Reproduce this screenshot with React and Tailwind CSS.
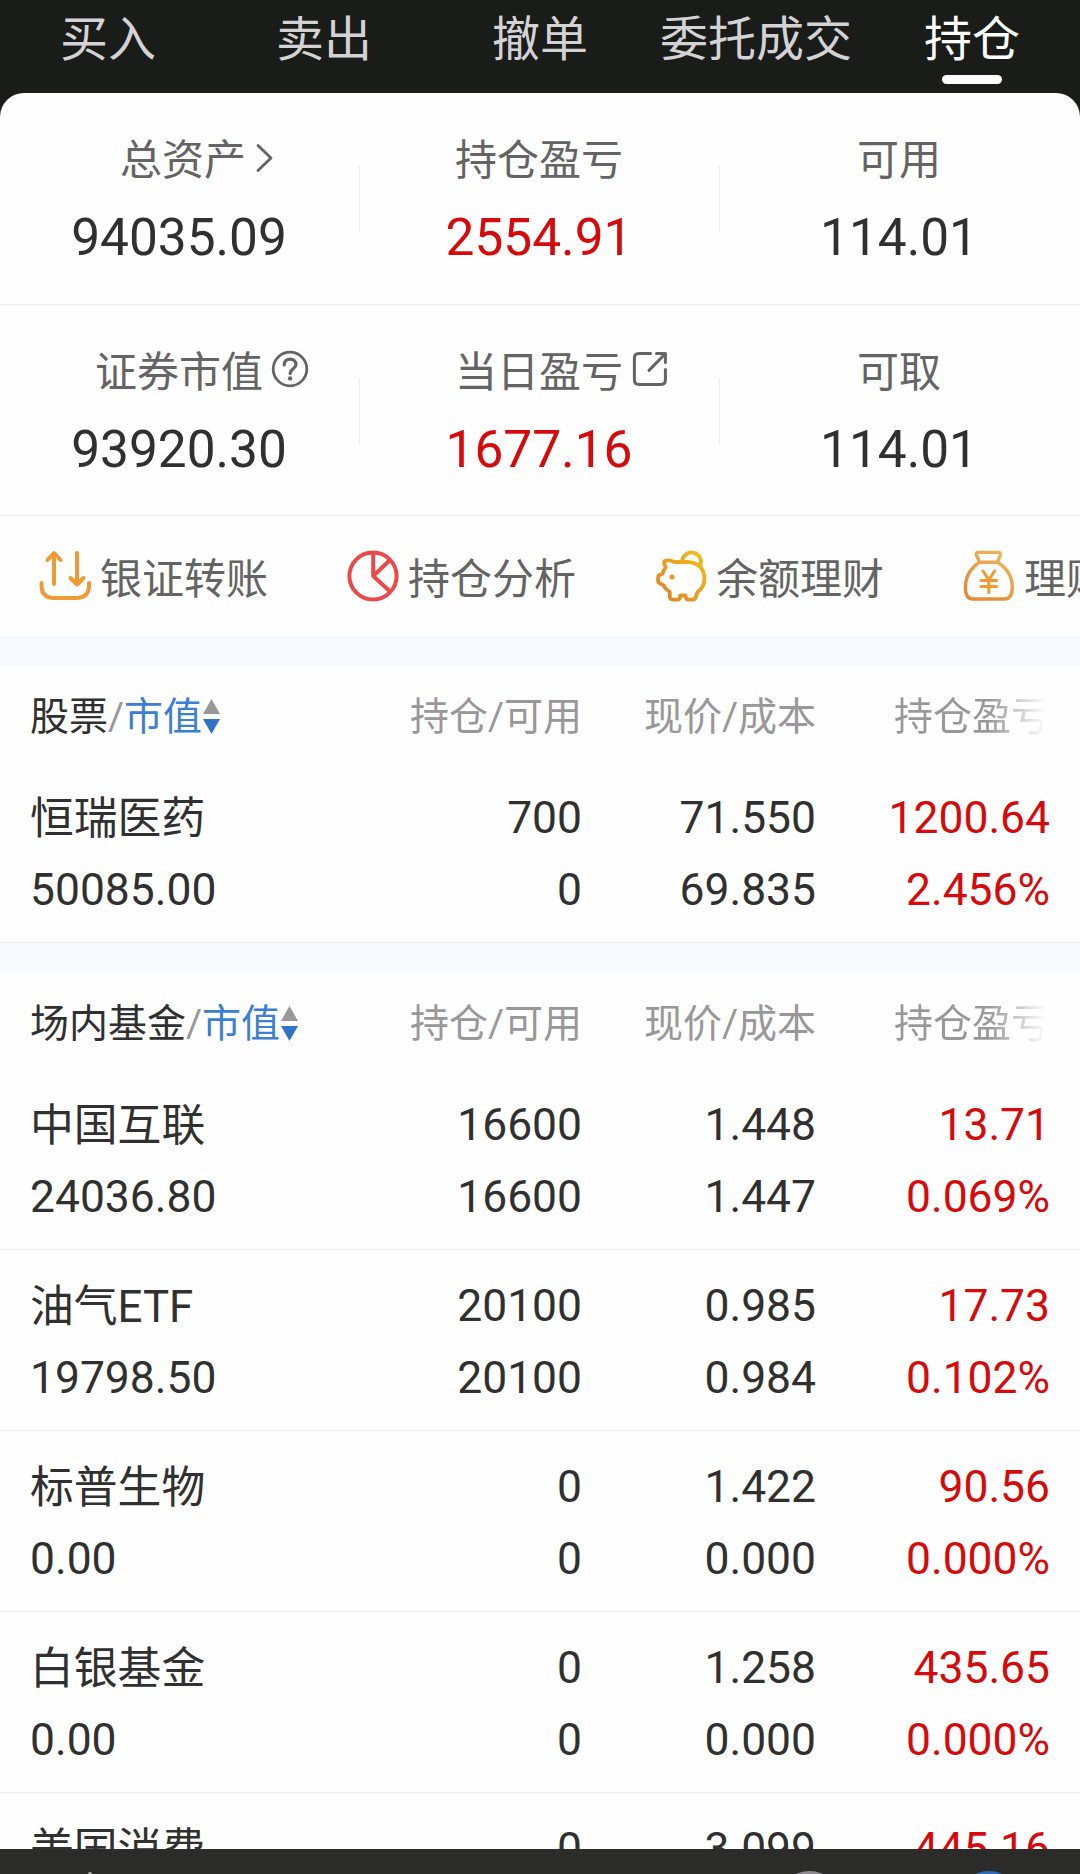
import clsx from 'clsx';

const tabs = [ '买入', '卖出', '撤单', '委托成交', '持仓' ];

const summary = [
	[
		{ label: '总资产', value: '94035.09', icon: 'chevron' },
		{ label: '持仓盈亏', value: '2554.91', up: true },
		{ label: '可用', value: '114.01' },
	],
	[
		{ label: '证券市值', value: '93920.30', icon: 'help' },
		{ label: '当日盈亏', value: '1677.16', up: true, icon: 'open' },
		{ label: '可取', value: '114.01' },
	],
];

const sections = [
	{
		title: '股票',
		rows: [
			[ '恒瑞医药', '50085.00', '700', '0', '71.550', '69.835', '1200.64', '2.456%' ],
		],
	},
	{
		title: '场内基金',
		rows: [
			[ '中国互联', '24036.80', '16600', '16600', '1.448', '1.447', '13.71', '0.069%' ],
			[ '油气ETF', '19798.50', '20100', '20100', '0.985', '0.984', '17.73', '0.102%' ],
			[ '标普生物', '0.00', '0', '0', '1.422', '0.000', '90.56', '0.000%' ],
			[ '白银基金', '0.00', '0', '0', '1.258', '0.000', '435.65', '0.000%' ],
			[ '美国消费', '', '0', '', '3.099', '', '445.16', '' ],
		],
	},
];

const svgDefaults = {
	fill: 'none',
	strokeLinecap: 'round',
	strokeLinejoin: 'round',
};

function ChevronIcon() {
	return (
		<svg { ...svgDefaults } className="ml-[10px] h-[30px] w-[18px] shrink-0" viewBox="0 0 18 30" stroke="#646464" strokeWidth="2.8">
			<path d="M2 2.5 L15 15 L2 27.5" />
		</svg>
	);
}

function HelpIcon() {
	return (
		<svg { ...svgDefaults } className="ml-[8px] h-[38px] w-[38px] shrink-0" viewBox="0 0 38 38" stroke="#646464">
			<circle cx="19" cy="19" r="16.8" strokeWidth="2.8" />
			<path d="M13.2 15 C13.2 7 25 7.3 25 14.6 C25 18.8 19.2 18.6 19.2 23.4" strokeWidth="3.2" />
			<circle cx="19.1" cy="28.4" r="2.2" fill="#646464" stroke="none" />
		</svg>
	);
}

function OpenIcon() {
	return (
		<svg { ...svgDefaults } className="ml-[8px] h-[38px] w-[38px] shrink-0" viewBox="0 0 38 38" stroke="#646464" strokeWidth="3">
			<path d="M19.5 3.4 H8 Q3.4 3.4 3.4 8 V30 Q3.4 34.4 8 34.4 H30 Q34.4 34.4 34.4 30 V19.5" />
			<path d="M18 20.4 L34 4" />
			<path d="M25.5 3.4 H34.4 V12.4" />
		</svg>
	);
}

function TransferIcon() {
	return (
		<svg { ...svgDefaults } className="size-[54px]" viewBox="0 0 54 54" stroke="#ee9a35" strokeWidth="4">
			<path d="M16 35 V5 M9.5 11 L16 4 L22.5 11" />
			<path d="M39 4 V34 M32.5 29 L39 35.5 L45.5 29" />
			<path d="M3.5 34 V36 Q3.5 49 16 49 H38 Q51 49 51 36 V34" />
		</svg>
	);
}

function PieIcon() {
	return (
		<svg { ...svgDefaults } className="size-[54px]" viewBox="0 0 54 54" stroke="#e94b4b" strokeWidth="4">
			<circle cx="27" cy="27" r="23.6" />
			<path d="M27.2 4 V27 L43.5 11.5 M27.2 27 L44 42.5" />
		</svg>
	);
}

function PiggyIcon() {
	return (
		<svg { ...svgDefaults } className="size-[54px]" viewBox="0 0 54 54" stroke="url(#piggy)" strokeWidth="3.8">
			<defs>
				<linearGradient id="piggy" x1="0" y1="54" x2="54" y2="0" gradientUnits="userSpaceOnUse">
					<stop offset="0.2" stopColor="#e28a26" />
					<stop offset="0.9" stopColor="#f3bd18" />
				</linearGradient>
			</defs>
			<path d="M28.5 13 H20.5 Q15.5 10.5 10.5 12 Q9.4 15 11.8 18 Q9.6 21.5 8.6 24.5 L4.5 26.5 Q3.4 30 4.5 33.6 L9.3 36.2 Q11.5 40 15.8 43 V48 Q16.5 50.6 19 50.6 H24 Q26 50.6 26.2 46.5 H31.6 Q32 50.6 34 50.6 H38.6 Q41 50.6 42 47.6 L43.6 43 Q50.5 38 50.5 29.5 Q50 14.5 34 12.8 Z" />
			<path d="M28.2 12 A9.4 9.4 0 1 1 46 17" />
			<circle cx="18" cy="28" r="2.6" fill="#e99a22" stroke="none" />
		</svg>
	);
}

function MoneyBagIcon() {
	return (
		<svg { ...svgDefaults } className="size-[54px]" viewBox="0 0 54 54" stroke="url(#bag)" strokeWidth="3.4">
			<defs>
				<linearGradient id="bag" x1="0" y1="54" x2="32" y2="0" gradientUnits="userSpaceOnUse">
					<stop offset="0" stopColor="#e08230" />
					<stop offset="1" stopColor="#ecb45c" />
				</linearGradient>
			</defs>
			<path d="M17.5 13 L14.2 5.5 Q14 3.4 16.5 3.4 H36.8 Q39 3.6 38.4 5.8 L35.4 13" />
			<path d="M17.5 13.2 H35.4 Q50 22 50.3 38 Q50.3 50 42.5 50 H10.8 Q3.4 50 3.4 38 Q3.8 22 17.5 13.2 Z" />
			<path d="M21 22 L26.8 31 L32.6 22 M19 31.6 H34.6 M19 37.6 H34.6 M26.8 31 V43.5" stroke="#f09a30" strokeWidth="3" />
		</svg>
	);
}

const summaryIcons = { chevron: ChevronIcon, help: HelpIcon, open: OpenIcon };

const actions = [
	{ label: '银证转账', Icon: TransferIcon },
	{ label: '持仓分析', Icon: PieIcon },
	{ label: '余额理财', Icon: PiggyIcon },
	{ label: '理财', Icon: MoneyBagIcon },
];

function TopTabs() {
	return (
		<nav className="grid h-[93px] grid-cols-5 text-[48px] leading-[79px] text-[#d5d2d5]">
			{ tabs.map( ( tab ) => {
				const active = tab === '持仓';
				return (
					<div key={ tab } className="flex flex-col items-center whitespace-nowrap">
						<span className={ clsx( active && 'text-white' ) }>{ tab }</span>
						{ active && <span className="-mt-1 h-[9px] w-[60px] shrink-0 rounded-full bg-white" /> }
					</div>
				);
			} ) }
		</nav>
	);
}

function SummaryCell( { label, value, up, icon } ) {
	const Icon = summaryIcons[ icon ];
	return (
		<div className="flex flex-1 flex-col items-center pt-[38px] pr-[2px]">
			<div className={ clsx( 'flex h-[60px] items-center text-[42px] leading-[64px] text-[#646464]', icon === 'chevron' && 'pl-[8px]' ) }>
				<span>{ label }</span>
				{ Icon && (
					<span className="-mt-[7px] flex w-0">
						<Icon />
					</span>
				) }
			</div>
			<div className={ clsx( 'mt-[13px] text-[51.4px] leading-[68px]', up ? 'text-[#d60a0a]' : 'text-[#303030]' ) }>
				{ value }
			</div>
		</div>
	);
}

function SummaryRow( { cells } ) {
	return (
		<div className="flex h-[211.5px] border-b border-[#ececec]">
			{ cells.map( ( cell, i ) => (
				<div key={ cell.label } className="flex w-[360px]">
					<SummaryCell { ...cell } />
					{ i < 2 && <div className="mt-[73px] -ml-px h-[66px] w-px bg-[#ececec]" /> }
				</div>
			) ) }
		</div>
	);
}

function QuickActions() {
	return (
		<div className="flex h-[120px] items-center gap-[78px] overflow-hidden pl-[38px]">
			{ actions.map( ( { label, Icon } ) => (
				<div key={ label } className="flex shrink-0 items-center gap-[8px] text-[42px] leading-[60px] text-[#646464]">
					<Icon />
					<span className="mt-[7px] whitespace-nowrap">{ label }</span>
				</div>
			) ) }
		</div>
	);
}

function SortArrows() {
	return (
		<svg className="-mt-[2px] ml-px h-[35px] w-[17px]" viewBox="0 0 17 35">
			<path d="M8.5 0 L17 15 H0 Z" fill="#999799" />
			<path d="M8.5 35 L17 20 H0 Z" fill="#3274c4" />
		</svg>
	);
}

const columns = 'grid grid-cols-[318px_234px_234px_234px] px-[30px]';

function SectionHeader( { title } ) {
	return (
		<div className={ clsx( columns, 'h-[96px] text-[39px] leading-[102px] whitespace-nowrap text-[#999799]' ) }>
			<div className="flex items-center">
				<span className="text-[#303030]">{ title }</span>
				<span>/</span>
				<span className="text-[#3b7ed2]">市值</span>
				<SortArrows />
			</div>
			<div className="text-right">持仓/可用</div>
			<div className="text-right">现价/成本</div>
			<div className="text-right">
				<span className="inline-block bg-linear-to-r from-[#999799] from-60% to-transparent to-98% bg-clip-text text-transparent">
					持仓盈亏
				</span>
			</div>
		</div>
	);
}

function HoldingRow( { row } ) {
	return (
		<div className={ clsx( columns, 'h-[181px] shrink-0 border-b border-[#ececec] pt-[20px] text-[44.4px] leading-[72px] text-[#303030]' ) }>
			{ [ 0, 2, 4, 6 ].map( ( i ) => (
				<div key={ i } className={ clsx( i > 0 && 'text-right', i === 6 && 'text-[#d60a0a]' ) }>
					<div className={ clsx( i === 0 && 'mt-px -mb-px text-[43.8px]' ) }>{ row[ i ] }</div>
					<div>{ row[ i + 1 ] }</div>
				</div>
			) ) }
		</div>
	);
}

export default function App() {
	return (
		<div className="flex h-[1874px] w-[1080px] flex-col overflow-hidden bg-[#191c19] font-['Roboto','Noto_Sans_CJK_SC',sans-serif]">
			<TopTabs />
			<main className="min-h-0 flex-1 overflow-hidden rounded-t-[24px] bg-[#fefefe]">
				{ summary.map( ( cells, i ) => (
					<SummaryRow key={ i } cells={ cells } />
				) ) }
				<QuickActions />
				{ sections.map( ( section ) => (
					<section key={ section.title }>
						<div className="h-[30px] bg-[#f6f9fe]" />
						<SectionHeader title={ section.title } />
						{ section.rows.map( ( row ) => (
							<HoldingRow key={ row[ 0 ] } row={ row } />
						) ) }
					</section>
				) ) }
			</main>
			<footer className="h-[25px] shrink-0 overflow-hidden bg-[#2b2c2a]">
				<svg className="h-[25px] w-[1080px]" viewBox="0 0 1080 25">
					<circle cx="90" cy="25" r="2" fill="#b5b2b5" />
					<circle cx="809.5" cy="53" r="31" fill="#8e8b90" />
					<circle cx="989" cy="53" r="31" fill="#2f6cb8" />
				</svg>
			</footer>
		</div>
	);
}
